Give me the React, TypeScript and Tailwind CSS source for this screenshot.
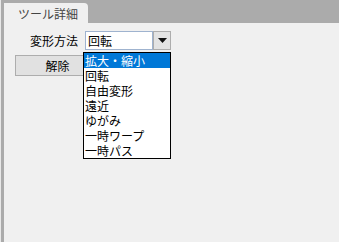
import React from 'react';

const items = ['拡大・縮小', '回転', '自由変形', '遠近', 'ゆがみ', '一時ワープ', '一時パス'];

const App: React.FC = () => {
  return (
    <div
      className="flex w-[339px] h-[242px] bg-[#ababab] text-[12px] leading-[15px] text-black"
      style={{ fontFamily: '"Noto Sans CJK JP", "Noto Sans", sans-serif' }}
    >
      <div className="w-px bg-[#e8e8e8]" />
      <div className="flex flex-col flex-1 ml-[3px]">
        {/* tab strip */}
        <div className="h-[23px] pt-[3px] flex">
          <div className="w-[84px] h-[20px] bg-[#f0f0f0] rounded-tr-[4px] flex items-center pl-[14px] text-[#444]">
            ツール詳細
          </div>
        </div>

        {/* panel */}
        <div className="relative flex-1 bg-[#f0f0f0]">
          <div className="flex items-center mt-[8px]">
            <div className="w-[74px] text-right">変形方法</div>
            <div className="ml-[7px] flex h-[19px]">
              <div className="w-[68px] bg-white border border-[#9fb3cf] flex items-center pl-[2px]">回転</div>
              <div className="w-[18px] bg-[#e3e3e3] border border-[#adadad] flex items-center justify-center">
                <svg width="9" height="5" viewBox="0 0 9 5">
                  <path d="M0 0H9L4.5 5Z" fill="#111" />
                </svg>
              </div>
            </div>
          </div>

          <div className="mt-[5px] ml-[11px] w-[85px] h-[21px] bg-[#e1e1e1] border border-[#adadad] flex items-center justify-center">
            解除
          </div>

          {/* open dropdown list */}
          <div className="absolute left-[79px] top-[29px] w-[88px] bg-white border border-black flex flex-col">
            {items.map((it, i) => (
              <div
                key={it}
                className={
                  i === 0
                    ? 'h-[15px] leading-[15px] pl-[1px] bg-[#0078d7] text-white'
                    : 'h-[15px] leading-[15px] pl-[1px]'
                }
              >
                {it}
              </div>
            ))}
          </div>
        </div>
      </div>
    </div>
  );
};

export default App;
